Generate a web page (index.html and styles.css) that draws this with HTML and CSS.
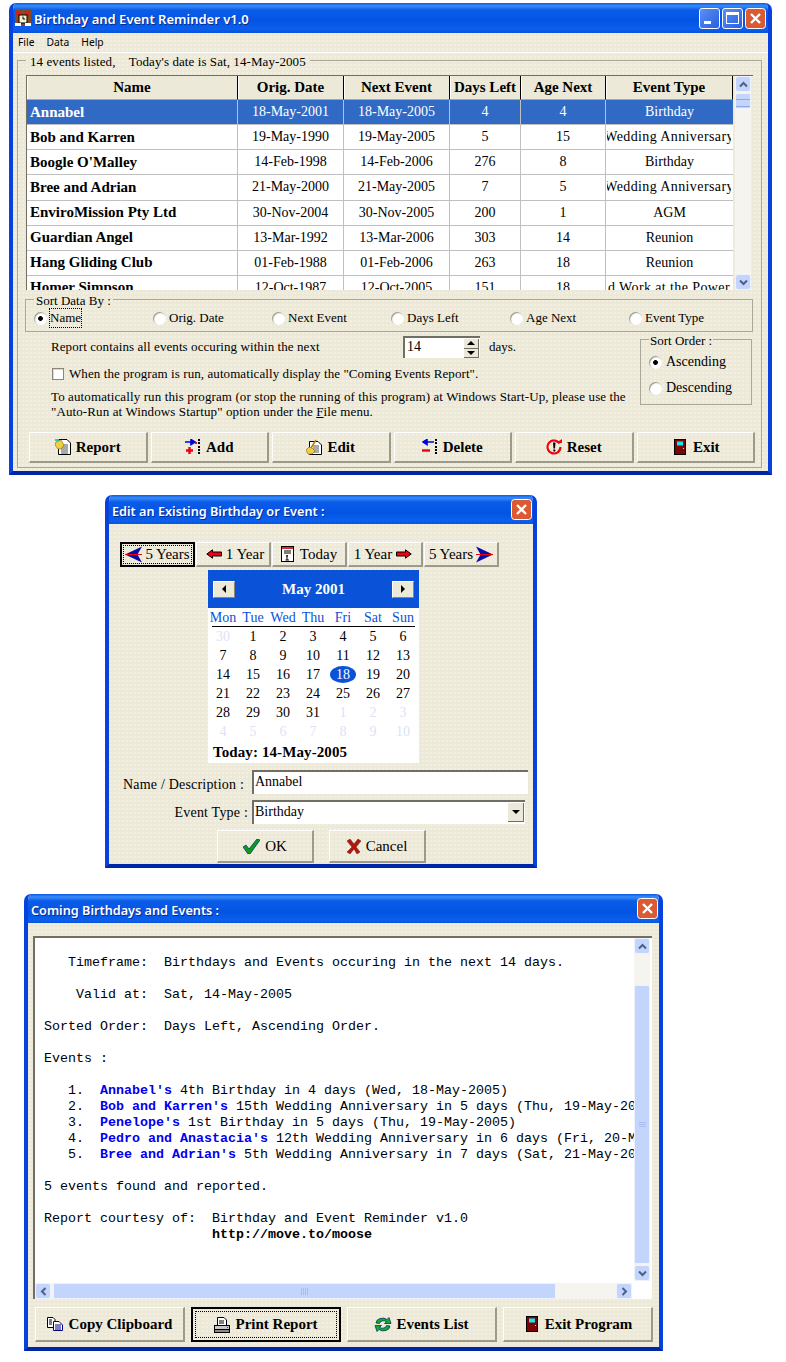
FILE: index.html
```html
<!DOCTYPE html>
<html lang="en">
<head>
    <meta charset="UTF-8">
    <meta name="viewport" content="width=device-width, initial-scale=1.0">
    <title>Birthday and Event Reminder v1.0</title>
    <link rel="stylesheet" href="styles.css">
</head>
<body>
    <svg class="icon-defs" xmlns="http://www.w3.org/2000/svg">
        <symbol id="chev-up" viewBox="0 0 9 7"><path d="M1 5.5L4.5 2L8 5.5" fill="none" stroke="#4d6185" stroke-width="2"/></symbol>
        <symbol id="chev-down" viewBox="0 0 9 7"><path d="M1 1.5L4.5 5L8 1.5" fill="none" stroke="#4d6185" stroke-width="2"/></symbol>
        <symbol id="chev-left" viewBox="0 0 7 9"><path d="M5.5 1L2 4.5L5.5 8" fill="none" stroke="#4d6185" stroke-width="2"/></symbol>
        <symbol id="chev-right" viewBox="0 0 7 9"><path d="M1.5 1L5 4.5L1.5 8" fill="none" stroke="#4d6185" stroke-width="2"/></symbol>
        <symbol id="close-x" viewBox="0 0 21 21">
            <rect x=".5" y=".5" width="20" height="20" rx="3" fill="#dc5a32" stroke="#fff"/>
            <path d="M6 6L15 15M15 6L6 15" stroke="#fff" stroke-width="2.4"/>
        </symbol>
        <symbol id="door" viewBox="0 0 12 16">
            <rect x=".5" y=".5" width="11" height="15" fill="#7a0505" stroke="#000"/>
            <rect x="3" y="2.500" width="6" height="4" fill="#19e6ec"/>
            <rect x="9" y="9" width="1" height="1" fill="#f0e020"/>
        </symbol>
        <symbol id="doc-hand" viewBox="0 0 16 16">
            <path d="M3.500 .5H12L15.500 4V15.500H3.500Z" fill="#fff" stroke="#000"/>
            <path d="M6 6H13M6 8H13M6 10H13M6 12H13M6 14H13" stroke="#555"/>
            <path d="M0 0H4V2H0Z" fill="#19d0d8"/>
            <path d="M1 3L6 1L9 6L6 10L3 10L0 6Z" fill="#f0d040" stroke="#806000" stroke-width=".6"/>
        </symbol>
        <symbol id="add" viewBox="0 0 16 16">
            <path d="M0 3H9M6 .5L10 3L6 5.500Z" fill="#0000e0" stroke="#0000e0" stroke-width="1.600"/>
            <path d="M4.500 8V15M1 11.500H8" stroke="#f00010" stroke-width="2.400"/>
            <path d="M13 0H15V2H13ZM13 3H15V5H13ZM13 7H15V9H13ZM13 10H15V12H13ZM13 13H15V15H13Z" fill="#000"/>
            <rect x="10" y="3" width="2" height="2" fill="#f00010"/>
        </symbol>
        <symbol id="remove" viewBox="0 0 16 16">
            <path d="M3 3H12M5 .5L1 3L5 5.500Z" fill="#0000e0" stroke="#0000e0" stroke-width="1.600"/>
            <path d="M0 11.500H8" stroke="#f00010" stroke-width="2.400"/>
            <path d="M13 0H15V2H13ZM13 3H15V5H13ZM13 7H15V9H13ZM13 10H15V12H13ZM13 13H15V15H13Z" fill="#000"/>
        </symbol>
        <symbol id="doc-pencil" viewBox="0 0 16 16">
            <path d="M3.500 2.500H12L15.500 6V15.500H3.500Z" fill="#fff" stroke="#000"/>
            <path d="M7 7H13M7 9H13M7 11H13M7 13H13" stroke="#555"/>
            <path d="M0 11L3 8L6 9L9 12L6 15H2Z" fill="#f0d040" stroke="#806000" stroke-width=".6"/>
            <path d="M5 9L10 1" stroke="#c08000" stroke-width="1.600"/>
        </symbol>
        <symbol id="reset" viewBox="0 0 16 16">
            <path d="M13.500 4.500A6.500 6.500 0 1 0 14.500 8" fill="none" stroke="#f00010" stroke-width="2.200"/>
            <path d="M10 4H16V0Z" fill="#f00010"/>
            <path d="M7 3.500H9.500L9 9.500H7.500Z" fill="#000"/>
            <rect x="7.300" y="10.500" width="2" height="2" fill="#000"/>
        </symbol>
        <symbol id="big-left" viewBox="0 0 17 17">
            <path d="M17 .5L0 8.500L17 16.500L12.500 8.500Z" fill="#0a0aa8"/>
            <path d="M0 8.500H17" stroke="#f00010"/>
        </symbol>
        <symbol id="big-right" viewBox="0 0 17 17">
            <path d="M0 .5L17 8.500L0 16.500L4.500 8.500Z" fill="#0a0aa8"/>
            <path d="M0 8.500H17" stroke="#f00010"/>
        </symbol>
        <symbol id="small-left" viewBox="0 0 16 10">
            <path d="M.8 5L6.500 .8V3H15.500V7H6.500V9.200Z" fill="#f00010" stroke="#000"/>
        </symbol>
        <symbol id="small-right" viewBox="0 0 16 10">
            <path d="M15.200 5L9.500 .8V3H.5V7H9.500V9.200Z" fill="#f00010" stroke="#000"/>
        </symbol>
        <symbol id="calendar" viewBox="0 0 13 16">
            <rect x=".5" y=".5" width="12" height="15" fill="#fff" stroke="#000"/>
            <rect x="1" y="1" width="11" height="2" fill="#d03030"/>
            <path d="M3 5H10M3 7H10M6 9V14M5 10H7M4.500 14H8" stroke="#000"/>
        </symbol>
        <symbol id="check" viewBox="0 0 17 15">
            <path d="M0 8L3 6L6 10L14 0L17 1L7 15H5Z" fill="#0c9c18" stroke="#083a70" stroke-width=".8"/>
        </symbol>
        <symbol id="cross" viewBox="0 0 14 15">
            <path d="M0 2L3 0L7 5L11 0L14 2L9 8L13 13L10 15L7 10L3 15L0 13L5 8Z" fill="#b01810" stroke="#701008" stroke-width=".5"/>
        </symbol>
        <symbol id="copy" viewBox="0 0 16 14">
            <path d="M.5 .5H6L8 2.500V10.500H.5Z" fill="#fff" stroke="#000"/>
            <path d="M6.500 4.500H12L15.500 8V13.500H6.500Z" fill="#fff" stroke="#000080"/>
            <path d="M8 8H14M8 10H14M8 12H14" stroke="#000080"/>
            <path d="M2 3H5M2 5H5M2 7H5" stroke="#000"/>
        </symbol>
        <symbol id="printer" viewBox="0 0 16 16">
            <path d="M3.500 .5H10L12.500 3V9H3.500Z" fill="#fff" stroke="#000"/>
            <path d="M5 4H10M5 6H10" stroke="#000"/>
            <rect x=".5" y="8.500" width="15" height="4" fill="#c8c8c8" stroke="#000"/>
            <rect x=".5" y="12.500" width="15" height="3" fill="#888" stroke="#000"/>
            <rect x="13" y="10" width="1" height="1" fill="#f00010"/>
        </symbol>
        <symbol id="refresh" viewBox="0 0 18 17">
            <path d="M2 7A6.500 5 0 0 1 13 3.500L15 1.500L17 7.500H10.500L12.500 5.800A4 3 0 0 0 5.500 7.500Z" fill="#10b020" stroke="#0a2a80" stroke-width=".8"/>
            <path d="M16 10A6.500 5 0 0 1 5 13.500L3 15.500L1 9.500H7.500L5.500 11.200A4 3 0 0 0 12.500 9.500Z" fill="#10b020" stroke="#0a2a80" stroke-width=".8"/>
        </symbol>
        <symbol id="app-logo" viewBox="0 0 16 16">
            <rect width="16" height="16" fill="#8a4a20"/>
            <rect x="1" y="1" width="5" height="5" fill="#d02020"/>
            <rect x="10" y="1" width="5" height="5" fill="#d02020"/>
            <rect x="4" y="5" width="8" height="8" fill="#f4f0d0" stroke="#000"/>
            <path d="M8 6.500V9H10" stroke="#000" fill="none"/>
            <rect y="13" width="6" height="3" fill="#fff"/>
            <rect x="10" y="13" width="6" height="3" fill="#fff"/>
        </symbol>
    </svg>

    <!-- main window -->
    <div class="window window-main">
        <div class="titlebar">
            <svg class="app-logo"><use href="#app-logo"/></svg>
            <span class="title-text">Birthday and Event Reminder v1.0</span>
            <div class="title-btn title-min"><span></span></div>
            <div class="title-btn title-max"><span></span></div>
            <svg class="title-close"><use href="#close-x"/></svg>
        </div>
        <div class="menubar">
            <span>File</span>
            <span>Data</span>
            <span>Help</span>
        </div>
        <fieldset class="main-frame">
            <legend>14 events listed,&nbsp;&nbsp;&nbsp;&nbsp;Today's date is Sat, 14-May-2005</legend>
            <div class="grid">
                <table class="events">
                    <colgroup>
                        <col class="col-name"><col class="col-date"><col class="col-date"><col class="col-days"><col class="col-age"><col class="col-type">
                    </colgroup>
                    <thead>
                        <tr><th>Name</th><th>Orig. Date</th><th>Next Event</th><th>Days Left</th><th>Age Next</th><th>Event Type</th></tr>
                    </thead>
                    <tbody>
                        <tr class="selected"><td class="name">Annabel</td><td>18-May-2001</td><td>18-May-2005</td><td>4</td><td>4</td><td>Birthday</td></tr>
                        <tr><td class="name">Bob and Karren</td><td>19-May-1990</td><td>19-May-2005</td><td>5</td><td>15</td><td><div class="clip">Wedding Anniversary</div></td></tr>
                        <tr><td class="name">Boogle O'Malley</td><td>14-Feb-1998</td><td>14-Feb-2006</td><td>276</td><td>8</td><td>Birthday</td></tr>
                        <tr><td class="name">Bree and Adrian</td><td>21-May-2000</td><td>21-May-2005</td><td>7</td><td>5</td><td><div class="clip">Wedding Anniversary</div></td></tr>
                        <tr><td class="name">EnviroMission Pty Ltd</td><td>30-Nov-2004</td><td>30-Nov-2005</td><td>200</td><td>1</td><td>AGM</td></tr>
                        <tr><td class="name">Guardian Angel</td><td>13-Mar-1992</td><td>13-Mar-2006</td><td>303</td><td>14</td><td>Reunion</td></tr>
                        <tr><td class="name">Hang Gliding Club</td><td>01-Feb-1988</td><td>01-Feb-2006</td><td>263</td><td>18</td><td>Reunion</td></tr>
                        <tr><td class="name">Homer Simpson</td><td>12-Oct-1987</td><td>12-Oct-2005</td><td>151</td><td>18</td><td><div class="clip">d Work at the Power</div></td></tr>
                    </tbody>
                </table>
                <div class="vscroll vscroll-main">
                    <div class="sb-btn"><svg><use href="#chev-up"/></svg></div>
                    <div class="sb-thumb sb-thumb-short"></div>
                    <div class="sb-fill"></div>
                    <div class="sb-btn"><svg><use href="#chev-down"/></svg></div>
                </div>
            </div>

            <fieldset class="sort-by">
                <legend>Sort Data By :</legend>
                <div class="sort-options">
                    <label class="opt"><span class="radio on"></span><span class="focused">Name</span></label>
                    <label class="opt"><span class="radio"></span>Orig. Date</label>
                    <label class="opt"><span class="radio"></span>Next Event</label>
                    <label class="opt"><span class="radio"></span>Days Left</label>
                    <label class="opt"><span class="radio"></span>Age Next</label>
                    <label class="opt"><span class="radio"></span>Event Type</label>
                </div>
            </fieldset>

            <div class="options">
                <div class="options-left">
                    <div class="report-line">
                        <span class="report-text">Report contains all events occuring within the next</span>
                        <div class="spinner">
                            <span>14</span>
                            <div class="spin-btns"><i class="spin-up"></i><i class="spin-down"></i></div>
                        </div>
                        <span class="days">days.</span>
                    </div>
                    <label class="auto-line"><span class="checkbox"></span>When the program is run, automatically display the "Coming Events Report".</label>
                    <p class="note">To automatically run this program (or stop the running of this program) at Windows Start-Up, please use the<br>"Auto-Run at Windows Startup" option under the <u>F</u>ile menu.</p>
                </div>
                <fieldset class="sort-order">
                    <legend>Sort Order :</legend>
                    <label class="opt-big"><span class="radio on"></span>Ascending</label>
                    <label class="opt-big"><span class="radio"></span>Descending</label>
                </fieldset>
            </div>

            <div class="main-buttons">
                <button class="btn btn-bold"><svg class="ico-16"><use href="#doc-hand"/></svg>Report</button>
                <button class="btn btn-bold"><svg class="ico-16"><use href="#add"/></svg>Add</button>
                <button class="btn btn-bold"><svg class="ico-16"><use href="#doc-pencil"/></svg>Edit</button>
                <button class="btn btn-bold"><svg class="ico-16"><use href="#remove"/></svg>Delete</button>
                <button class="btn btn-bold"><svg class="ico-16"><use href="#reset"/></svg>Reset</button>
                <button class="btn btn-bold btn-exit"><svg class="ico-door"><use href="#door"/></svg>Exit</button>
            </div>
        </fieldset>
    </div>

    <!-- edit dialog -->
    <div class="window window-edit">
        <div class="titlebar titlebar-dlg">
            <span class="title-text">Edit an Existing Birthday or Event :</span>
            <svg class="title-close"><use href="#close-x"/></svg>
        </div>
        <div class="year-buttons">
            <button class="btn btn-year btn-focus"><svg class="ico-big"><use href="#big-left"/></svg>5 Years<span class="focus-box focus-box-year"></span></button>
            <button class="btn btn-year"><svg class="ico-small"><use href="#small-left"/></svg>1 Year</button>
            <button class="btn btn-year"><svg class="ico-cal"><use href="#calendar"/></svg>Today</button>
            <button class="btn btn-year">1 Year<svg class="ico-small"><use href="#small-right"/></svg></button>
            <button class="btn btn-year">5 Years<svg class="ico-big"><use href="#big-right"/></svg></button>
        </div>

        <div class="calendar">
            <div class="cal-head">
                <button class="cal-nav"><i class="tri-left"></i></button>
                <span>May 2001</span>
                <button class="cal-nav"><i class="tri-right"></i></button>
            </div>
            <div class="cal-days">
                <span>Mon</span><span>Tue</span><span>Wed</span><span>Thu</span><span>Fri</span><span>Sat</span><span>Sun</span>
            </div>
            <div class="cal-rule"></div>
            <div class="cal-dates">
                <span class="off">30</span><span>1</span><span>2</span><span>3</span><span>4</span><span>5</span><span>6</span>
                <span>7</span><span>8</span><span>9</span><span>10</span><span>11</span><span>12</span><span>13</span>
                <span>14</span><span>15</span><span>16</span><span>17</span><span class="picked">18</span><span>19</span><span>20</span>
                <span>21</span><span>22</span><span>23</span><span>24</span><span>25</span><span>26</span><span>27</span>
                <span>28</span><span>29</span><span>30</span><span>31</span><span class="off">1</span><span class="off">2</span><span class="off">3</span>
                <span class="off">4</span><span class="off">5</span><span class="off">6</span><span class="off">7</span><span class="off">8</span><span class="off">9</span><span class="off">10</span>
            </div>
            <div class="cal-today">Today: 14-May-2005</div>
        </div>

        <div class="form-row form-name">
            <label>Name / Description :</label>
            <div class="field field-name">Annabel</div>
        </div>
        <div class="form-row form-type">
            <label>Event Type :</label>
            <div class="field field-type">Birthday<span class="combo-btn"><i class="tri-down"></i></span></div>
        </div>
        <div class="edit-buttons">
            <button class="btn btn-edit"><svg class="ico-check"><use href="#check"/></svg>OK</button>
            <button class="btn btn-edit"><svg class="ico-cross"><use href="#cross"/></svg>Cancel</button>
        </div>
    </div>

    <!-- report window -->
    <div class="window window-report">
        <div class="titlebar titlebar-dlg">
            <span class="title-text">Coming Birthdays and Events :</span>
            <svg class="title-close"><use href="#close-x"/></svg>
        </div>
        <div class="report-box">
            <pre class="report-text-box">   Timeframe:  Birthdays and Events occuring in the next 14 days.

    Valid at:  Sat, 14-May-2005

Sorted Order:  Days Left, Ascending Order.

Events :

   1.  <b>Annabel's</b> 4th Birthday in 4 days (Wed, 18-May-2005)
   2.  <b>Bob and Karren's</b> 15th Wedding Anniversary in 5 days (Thu, 19-May-2005)
   3.  <b>Penelope's</b> 1st Birthday in 5 days (Thu, 19-May-2005)
   4.  <b>Pedro and Anastacia's</b> 12th Wedding Anniversary in 6 days (Fri, 20-May-2005)
   5.  <b>Bree and Adrian's</b> 5th Wedding Anniversary in 7 days (Sat, 21-May-2005)

5 events found and reported.

Report courtesy of:  Birthday and Event Reminder v1.0
                     <strong>http://move.to/moose</strong></pre>
            <div class="vscroll vscroll-report">
                <div class="sb-btn"><svg><use href="#chev-up"/></svg></div>
                <div class="sb-gap"></div>
                <div class="sb-thumb sb-thumb-long"><em></em></div>
                <div class="sb-btn"><svg><use href="#chev-down"/></svg></div>
            </div>
            <div class="hscroll">
                <div class="sb-btn sb-btn-h"><svg><use href="#chev-left"/></svg></div>
                <div class="hs-thumb"><em></em></div>
                <div class="sb-fill"></div>
                <div class="sb-btn sb-btn-h"><svg><use href="#chev-right"/></svg></div>
            </div>
        </div>
        <div class="report-buttons">
            <button class="btn btn-bold btn-report"><svg class="ico-copy"><use href="#copy"/></svg>Copy Clipboard</button>
            <button class="btn btn-bold btn-report btn-focus"><svg class="ico-16"><use href="#printer"/></svg>Print Report<span class="focus-box"></span></button>
            <button class="btn btn-bold btn-report"><svg class="ico-refresh"><use href="#refresh"/></svg>Events List</button>
            <button class="btn btn-bold btn-report btn-exit"><svg class="ico-door"><use href="#door"/></svg>Exit Program</button>
        </div>
    </div>
</body>
</html>
```

FILE: styles.css
```css
* {
    box-sizing: border-box;
}
body {
    margin: 0;
    padding-top: 3px;
    background: #fff;
    color: #000;
    font-family: "Liberation Serif", serif;
    font-size: 13px;
}
.icon-defs {
    display: none;
}
svg {
    display: block;
    flex: none;
}

/* windows */
.window {
    background: #ece9d8 radial-gradient(#f3f0e2 .7px, transparent .8px) 0 0 / 4px 4px;
    border: 4px solid #0842dc;
    border-top: 0;
    border-bottom-color: #0026a8;
    border-radius: 7px 7px 0 0;
    overflow: hidden;
}
.window-main {
    width: 763px;
    height: 472px;
    margin-left: 9px;
}
.window-edit {
    width: 432px;
    height: 373px;
    margin: 20px 0 0 105px;
}
.window-report {
    width: 639px;
    height: 457px;
    margin: 26px 0 0 24px;
}
.titlebar {
    display: flex;
    align-items: center;
    height: 30px;
    margin: 0 -4px;
    padding: 0 6px 0 6px;
    background: linear-gradient(#0a5ae8 0, #3a8cf8 3px, #0a5ce8 7px, #0454e4 18px, #0a60ec 26px, #0a52d8 30px);
}
.titlebar-dlg {
    height: 29px;
    padding-left: 7px;
    padding-right: 5px;
}
.titlebar-dlg .title-text {
    font-size: 12.7px;
}
.app-logo {
    width: 16px;
    height: 16px;
    margin-right: 3px;
}
.title-text {
    flex: 1;
    padding-top: 2px;
    color: #fff;
    font-family: "Noto Sans", sans-serif;
    font-size: 13px;
    font-weight: 600;
    text-shadow: 1px 1px 0 #0a2c90;
}
.title-btn {
    display: flex;
    width: 21px;
    height: 21px;
    margin-right: 2px;
    background: linear-gradient(135deg, #5a90f4, #2a5ee0);
    border: 1px solid #fff;
    border-radius: 3px;
}
.title-min span {
    width: 7px;
    height: 3px;
    margin: 12px 0 0 4px;
    background: #fff;
}
.title-max span {
    width: 13px;
    height: 12px;
    margin: 3px;
    border: 1px solid #fff;
    border-top-width: 3px;
}
.title-close {
    width: 21px;
    height: 21px;
}

/* main window */
.menubar {
    display: flex;
    gap: 12px;
    height: 20px;
    padding: 2px 0 0 5px;
    border-bottom: 1px solid #fff;
    font-family: "Noto Sans", sans-serif;
    font-size: 10.3px;
}
fieldset {
    min-width: 0;
    margin: 0;
    border: 1px solid #aca899;
}
legend {
    height: 15px;
    line-height: 17px;
}
.main-frame {
    width: 745px;
    height: 415px;
    margin-left: 4px;
    padding: 7px 8px 0;
}
.main-frame > legend {
    padding: 0 4px;
    letter-spacing: .08px;
}
.grid {
    display: flex;
    width: 727px;
    height: 215px;
    overflow: hidden;
    border-top: 1px solid #716f64;
    border-left: 1px solid #716f64;
}
.events {
    flex: none;
    width: 706px;
    height: 225px;
    border-spacing: 0;
    table-layout: fixed;
    background: #fff;
}
.col-name { width: 211px; }
.col-date { width: 106px; }
.col-days { width: 71px; }
.col-age { width: 85px; }
.col-type { width: 127px; }
.events th {
    height: 24px;
    padding: 0;
    background: #ece9d8;
    border-right: 1px solid #000;
    border-bottom: 1px solid #aca899;
    box-shadow: inset 1px 0 0 #fff;
    font-size: 15px;
}
.events td {
    height: 25px;
    padding: 0;
    border-right: 1px solid #c0c0c0;
    border-bottom: 1px solid #c0c0c0;
    font-size: 14px;
    text-align: center;
    white-space: nowrap;
}
.events td:last-child {
    border-right: 0;
}
.events td.name {
    padding-left: 3px;
    font-size: 15px;
    font-weight: bold;
    text-align: left;
}
.clip {
    display: flex;
    justify-content: center;
    width: 124px;
    margin-left: 1px;
    overflow: hidden;
    letter-spacing: .4px;
}
.selected td {
    background: #316ac5;
    color: #fff;
}
.vscroll {
    display: flex;
    flex-direction: column;
    flex: none;
    width: 16px;
    background: #f5f4ee;
}
.vscroll-main {
    height: 214px;
    margin-left: 2px;
}
.sb-btn {
    display: flex;
    align-items: center;
    justify-content: center;
    flex: none;
    width: 16px;
    height: 16px;
    background: #c3d4fd;
    border: 1px solid #eef2fd;
    border-radius: 3px;
}
.sb-btn svg {
    width: 9px;
    height: 7px;
}
.sb-btn-h svg {
    width: 7px;
    height: 9px;
}
.sb-thumb {
    background: #c3d4fd;
    border: 1px solid #eef2fd;
    border-radius: 2px;
}
.sb-thumb-short {
    height: 16px;
    margin-top: 1px;
    background: repeating-linear-gradient(#c3d4fd 0 5px, #8fa8e8 5px 6px, #c3d4fd 6px 7px);
}
.sb-fill {
    flex: 1;
}
.sort-by {
    width: 728px;
    height: 40px;
    margin: 2px 0 0 -1px;
    padding: 0 0 0 8px;
}
.sort-by legend {
    padding: 0 2px;
}
.sort-options {
    display: grid;
    grid-template-columns: repeat(6, 119px);
    height: 22px;
    align-items: center;
}
.opt, .opt-big, .auto-line {
    display: flex;
    align-items: center;
}
.radio {
    flex: none;
    width: 13px;
    height: 13px;
    margin-right: 3px;
    background: #fff;
    border-radius: 50%;
    box-shadow: inset 1px 1px 1px #9a9786;
}
.radio.on {
    background: radial-gradient(circle, #000 2px, #fff 2.8px);
}
.focused {
    padding: 1px 0;
    outline: 1px dotted #000;
}
.options {
    display: flex;
    height: 100px;
}
.options-left {
    width: 614px;
    padding: 4px 0 0 25px;
}
.report-line {
    display: flex;
    align-items: center;
    height: 22px;
}
.report-text {
    width: 352px;
    letter-spacing: .08px;
}
.spinner {
    display: flex;
    justify-content: space-between;
    width: 77px;
    height: 22px;
    padding: 1px 1px 0 2px;
    background: #fff;
    border-top: 2px solid #716f64;
    border-left: 2px solid #716f64;
    font-size: 14px;
}
.spin-btns {
    display: flex;
    flex-direction: column;
    width: 15px;
    height: 19px;
}
.spin-btns i {
    display: block;
    flex: 1;
    position: relative;
    background: #ece9d8;
    border-right: 1px solid #716f64;
    border-bottom: 1px solid #716f64;
}
.spin-btns i::after {
    content: "";
    position: absolute;
    left: 3px;
    top: 2px;
    border-left: 4px solid transparent;
    border-right: 4px solid transparent;
}
.spin-up::after {
    border-bottom: 4px solid #000;
}
.spin-down::after {
    border-top: 4px solid #000;
}
.days {
    margin-left: 9px;
}
.auto-line {
    height: 16px;
    margin-top: 8px;
    padding-left: 1px;
    letter-spacing: .08px;
}
.checkbox {
    flex: none;
    width: 12px;
    height: 12px;
    margin-right: 5px;
    background: #fff;
    border: 1px solid #8a8778;
    box-shadow: inset 1px 1px 0 #dcd9ca;
}
.note {
    margin: 7px 0 0;
    line-height: 15px;
    white-space: nowrap;
    letter-spacing: .11px;
}
.sort-order {
    width: 112px;
    height: 73px;
    padding: 0 0 0 8px;
}
.sort-order legend {
    padding: 0 1px;
}
.opt-big {
    height: 26px;
    font-size: 14px;
}
.opt-big:first-of-type {
    margin-top: 2px;
}
.opt-big .radio {
    margin-right: 4px;
}

/* buttons */
.btn {
    display: flex;
    align-items: center;
    justify-content: center;
    position: relative;
    padding: 0;
    background: #ece9d8 radial-gradient(#f3f0e2 .7px, transparent .8px) 0 0 / 4px 4px;
    border: 0;
    border-top: 1px solid #fff;
    border-left: 1px solid #fff;
    border-right: 2px solid #9d9a8a;
    border-bottom: 2px solid #9d9a8a;
    color: #000;
    font-family: "Liberation Serif", serif;
    font-size: 15px;
}
.btn-bold {
    font-weight: bold;
}
.btn-focus {
    border: 2px solid #000;
}
.btn-exit {
    padding-left: 3px;
}
.main-buttons {
    display: grid;
    grid-template-columns: repeat(6, 1fr);
    gap: 3px;
    width: 726px;
    height: 31px;
    margin-left: 3px;
}
.ico-16 {
    width: 16px;
    height: 16px;
    margin-right: 5px;
}
.ico-door {
    width: 12px;
    height: 16px;
    margin-right: 7px;
}

/* edit dialog */
.year-buttons {
    display: flex;
    gap: 1px;
    height: 25px;
    margin: 18px 0 0 11px;
}
.btn-year {
    width: 75px;
}
.ico-big {
    width: 17px;
    height: 17px;
    margin-right: 3px;
}
.ico-big:last-child {
    margin: 0 0 0 3px;
}
.ico-small {
    width: 16px;
    height: 10px;
    margin: 0 4px;
}
.ico-cal {
    width: 13px;
    height: 16px;
    margin-right: 6px;
}
.calendar {
    width: 211px;
    height: 193px;
    margin: 3px 0 0 99px;
    background: #fff;
}
.cal-head {
    display: flex;
    align-items: center;
    justify-content: space-between;
    height: 38px;
    padding: 0 5px;
    background: #0a52d8;
    color: #fff;
    font-size: 15px;
    font-weight: bold;
}
.cal-nav {
    display: flex;
    align-items: center;
    justify-content: center;
    width: 22px;
    height: 17px;
    padding: 0;
    background: #ece9d8;
    border: 0;
    border-top: 1px solid #fff;
    border-left: 1px solid #fff;
    border-right: 1px solid #8a8778;
    border-bottom: 1px solid #8a8778;
}
.tri-left, .tri-right {
    border-top: 4px solid transparent;
    border-bottom: 4px solid transparent;
}
.tri-left {
    border-right: 4px solid #000;
}
.tri-right {
    border-left: 4px solid #000;
}
.tri-down {
    border-left: 4px solid transparent;
    border-right: 4px solid transparent;
    border-top: 4px solid #000;
}
.cal-days, .cal-dates {
    display: grid;
    grid-template-columns: repeat(7, 30px);
    text-align: center;
}
.cal-days {
    height: 18px;
    color: #0a52d8;
    font-size: 14px;
    line-height: 20px;
}
.cal-rule {
    height: 1px;
    margin: 0 4px;
    background: #000;
}
.cal-dates {
    grid-auto-rows: 19px;
    font-size: 14px;
    line-height: 19px;
}
.cal-dates .off {
    color: #dbe3f8;
}
.cal-dates .picked {
    width: 26px;
    height: 17px;
    margin: 1px 2px;
    background: #0a52d8;
    border-radius: 50%;
    color: #fff;
    line-height: 17px;
}
.cal-today {
    padding: 1px 0 0 5px;
    font-size: 15px;
    font-weight: bold;
    letter-spacing: .1px;
    line-height: 21px;
}
.form-row {
    display: flex;
    align-items: center;
    font-size: 14px;
}
.form-row label {
    text-align: right;
    white-space: nowrap;
    letter-spacing: .2px;
}
.form-name {
    margin-top: 7px;
}
.form-name label {
    width: 135px;
    margin-right: 8px;
    padding-top: 5px;
}
.form-type {
    margin-top: 6px;
}
.form-type label {
    width: 139px;
    margin-right: 4px;
    padding-top: 1px;
}
.field {
    display: flex;
    justify-content: space-between;
    height: 24px;
    padding: 0 1px;
    background: #fff;
    border-top: 2px solid #716f64;
    border-left: 2px solid #716f64;
    line-height: 19px;
}
.field-name {
    width: 276px;
}
.field-type {
    width: 273px;
    padding-right: 1px;
}
.combo-btn {
    display: flex;
    align-items: center;
    justify-content: center;
    width: 16px;
    height: 19px;
    margin-top: 1px;
    background: #ece9d8;
    border-right: 1px solid #716f64;
    border-bottom: 1px solid #716f64;
}
.edit-buttons {
    display: flex;
    gap: 15px;
    height: 33px;
    margin: 6px 0 0 108px;
}
.btn-edit {
    width: 97px;
}
.ico-check {
    width: 17px;
    height: 15px;
    margin-right: 5px;
}
.ico-cross {
    width: 14px;
    height: 15px;
    margin-right: 5px;
}

/* report window */
.report-box {
    display: grid;
    grid-template-columns: 599px 16px;
    grid-template-rows: 345px 16px;
    width: 619px;
    height: 363px;
    margin: 13px 0 0 5px;
    background: #fff;
    border-top: 2px solid #716f64;
    border-left: 2px solid #716f64;
}
.report-text-box {
    margin: 0;
    padding: 17px 0 0 9px;
    overflow: hidden;
    font-family: "Liberation Mono", monospace;
    font-size: 13.33px;
    line-height: 16px;
}
.report-text-box b {
    color: #0000f0;
}
.vscroll-report {
    height: 343px;
}
.sb-gap {
    height: 31px;
    flex: none;
}
.sb-thumb-long {
    display: flex;
    align-items: center;
    justify-content: center;
    flex: 1;
    margin-bottom: 1px;
    width: 16px;
}
.sb-thumb-long em {
    width: 7px;
    height: 5px;
    background: repeating-linear-gradient(#a8bdf0 0 1px, #c3d4fd 1px 2px);
}
.hscroll {
    display: flex;
    grid-column: 1;
    grid-row: 2;
    width: 597px;
    height: 16px;
    background: #f5f4ee;
}
.hs-thumb {
    display: flex;
    align-items: center;
    justify-content: center;
    width: 503px;
    margin-left: 2px;
    background: #c3d4fd;
    border: 1px solid #eef2fd;
    border-radius: 2px;
}
.hs-thumb em {
    width: 7px;
    height: 7px;
    background: repeating-linear-gradient(90deg, #a8bdf0 0 1px, #c3d4fd 1px 2px);
}
.report-buttons {
    display: flex;
    gap: 6px;
    height: 35px;
    margin: 8px 0 0 7px;
}
.btn-report {
    width: 150px;
}
.focus-box {
    position: absolute;
    inset: 3px;
    outline: 1px dotted #000;
}
.focus-box-year {
    inset: 2px;
}
.ico-copy {
    width: 16px;
    height: 14px;
    margin-right: 6px;
}
.ico-refresh {
    width: 18px;
    height: 17px;
    margin-right: 4px;
}
```
